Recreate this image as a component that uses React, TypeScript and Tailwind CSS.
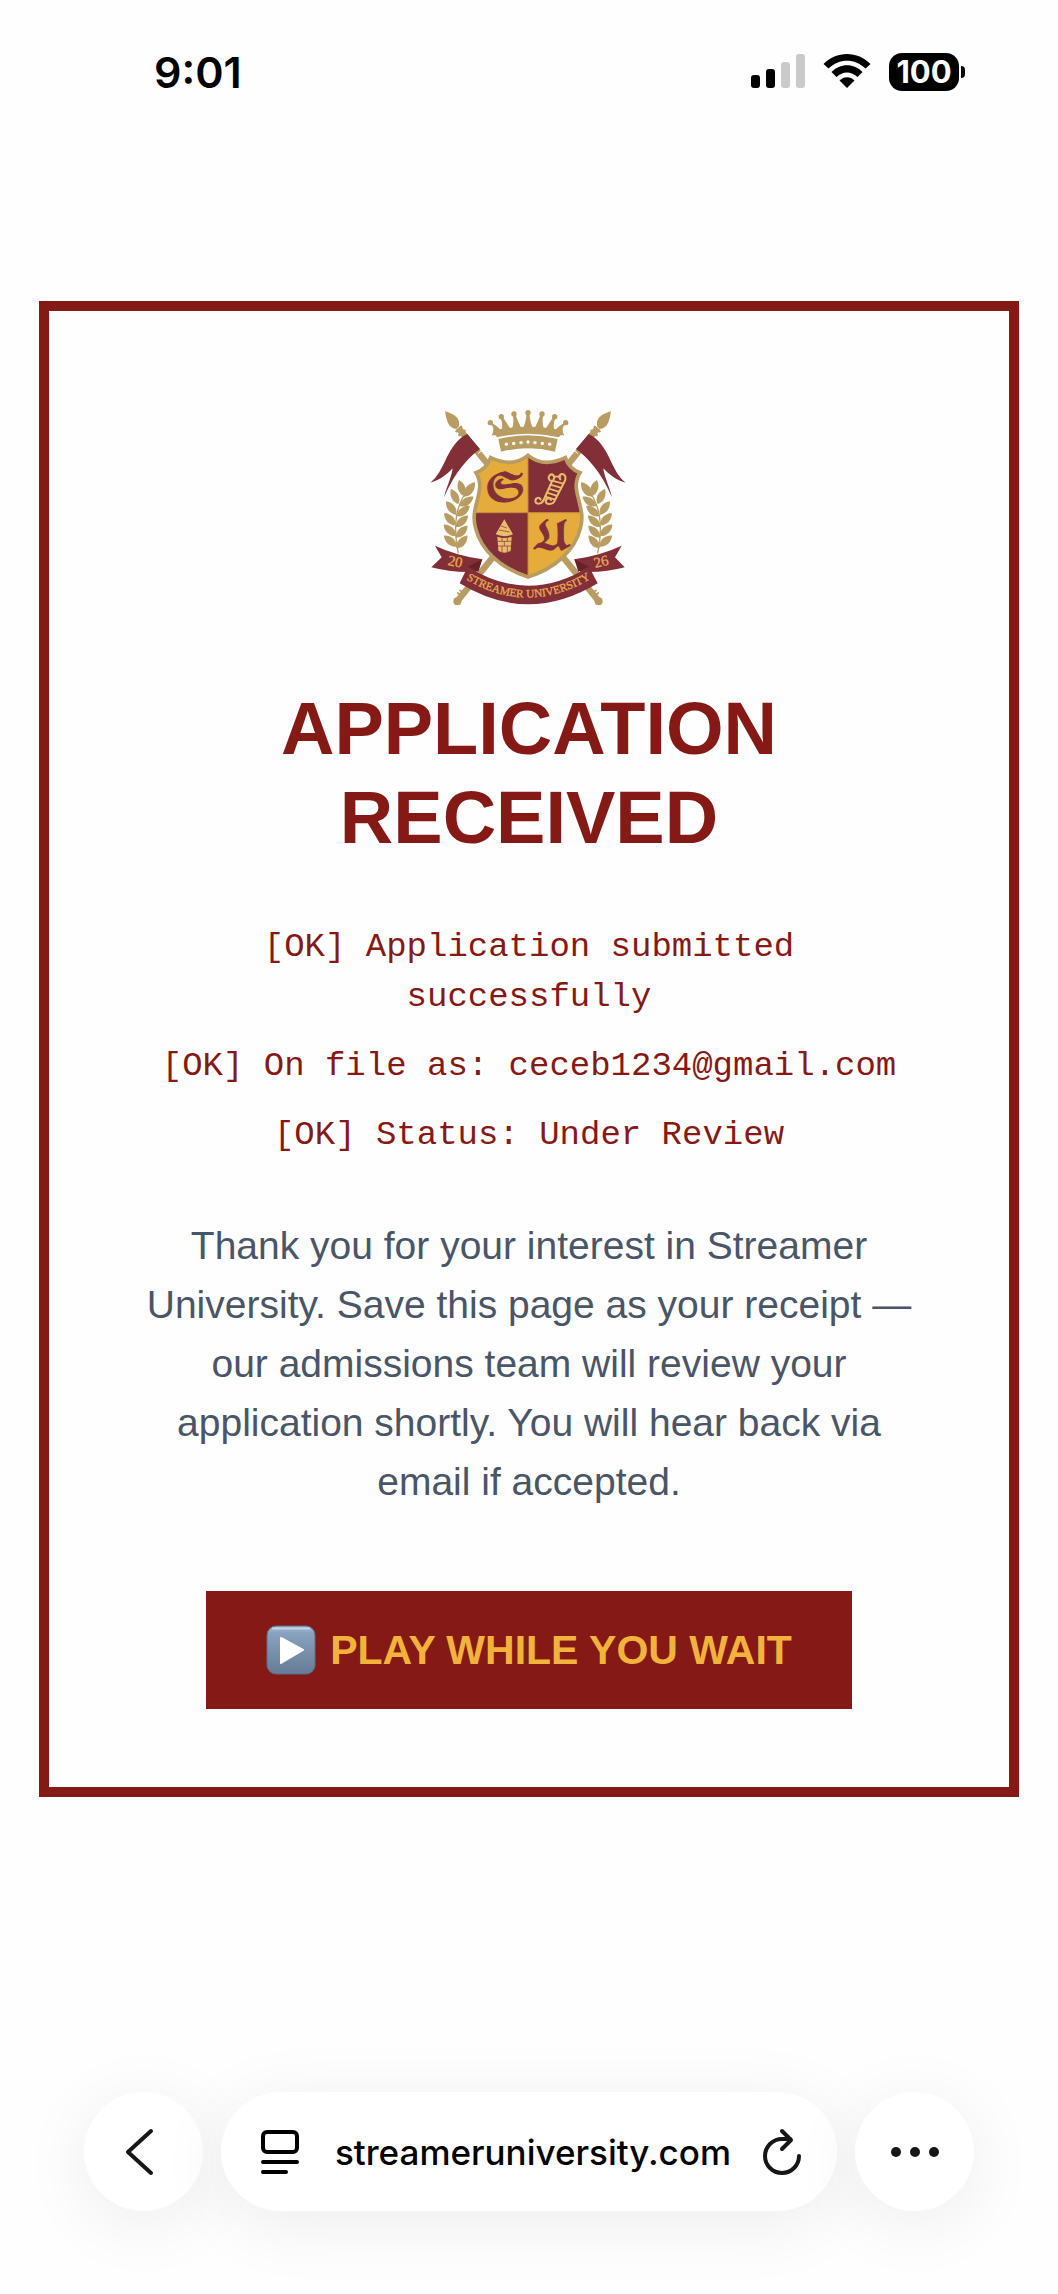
import { useState } from 'react';

const STATUS_LINES = [
  '[OK] Application submitted successfully',
  '[OK] On file as: ceceb1234@gmail.com',
  '[OK] Status: Under Review',
];

// Laurel leaves: base x, base y, rotation, length scale
const LEAVES = [
  [112, 440, -48, 1],
  [110, 408, -46, 1],
  [109, 376, -42, 1],
  [111, 344, -36, 1],
  [118, 312, -26, 1],
  [134, 288, -16, 1],
  [112, 444, 42, 1],
  [110, 412, 46, 1],
  [110, 380, 48, 1],
  [113, 348, 52, 1],
  [122, 318, 56, 1],
  [134, 290, 38, 1.1],
];

// Crown points: ball x, ball y, base x, base y
const CROWN_POINTS = [
  [214, 68, 238, 100],
  [247, 50, 263, 94],
  [285, 42, 294, 90],
  [327, 38, 327, 88],
  [369, 42, 360, 90],
  [407, 50, 391, 94],
  [440, 68, 416, 100],
];

const SHIELD =
  'M327 166 C295 192 255 192 215 173 C208 194 194 210 171 218 C205 270 150 320 170 385 C186 450 245 505 327 531 C409 505 468 450 484 385 C504 320 449 270 483 218 C460 210 446 194 439 173 C399 192 359 192 327 166 Z';

function CrestSide() {
  return (
    <g>
      {/* Lance */}
      <path d="M118 84 L538 602" stroke="#b89c62" strokeWidth="19" />
      <path d="M172 152 L186 141 M178 160 L193 148" stroke="#fefefe" strokeWidth="3" />
      <path d="M78 34 C102 42 126 52 119 80 L112 87 C88 86 82 60 78 34 Z" fill="#b89c62" />
      <path d="M112 94 L127 81 M121 105 L137 92" stroke="#b89c62" strokeWidth="7" strokeLinecap="round" />
      <path d="M517 582 L531 571 M523 591 L538 579" stroke="#b89c62" strokeWidth="5" strokeLinecap="round" />
      <circle cx="539" cy="604" r="12" fill="#b89c62" />
      {/* Pennant */}
      <path
        d="M145 102 L183 147 C150 170 108 215 75 292 C84 258 98 230 101 205 C82 225 62 240 34 248 C80 214 82 132 145 102 Z"
        fill="#822f38"
      />
      {/* Laurel */}
      <path d="M152 262 C112 310 100 370 118 460" stroke="#b89c62" strokeWidth="4" fill="none" />
      {LEAVES.map(([x, y, angle, scale]) => (
        <path
          key={`${x}-${y}-${angle}`}
          d="M0 0 C17 -12 14 -36 0 -50 C-14 -36 -14 -12 0 0 Z"
          transform={`translate(${x} ${y}) rotate(${angle}) scale(${scale})`}
          fill="#b89c62"
        />
      ))}
    </g>
  );
}

function Crest() {
  return (
    <svg viewBox="0 0 660 660" className="w-[220px] h-[220px]" role="img" aria-label="Streamer University crest">
      <defs>
        <clipPath id="shield">
          <path d={SHIELD} />
        </clipPath>
        <path id="motto" d="M138 536 Q328 650 519 534" />
      </defs>

      <CrestSide />
      <g transform="translate(654 0) scale(-1 1)">
        <CrestSide />
      </g>

      {/* Crown */}
      {CROWN_POINTS.map(([x, y, baseX, baseY]) => (
        <g key={x} fill="#b89c62">
          <path d={`M${x - 4} ${y} L${x + 4} ${y} Q${baseX + 6} ${baseY - 16} ${baseX + 20} ${baseY + 6} L${baseX - 20} ${baseY + 6} Q${baseX - 6} ${baseY - 16} ${x - 4} ${y} Z`} />
          <circle cx={x} cy={y} r="8" />
        </g>
      ))}
      <path d="M222 92 Q327 68 432 92 L420 112 Q327 90 234 112 Z" fill="#b89c62" />
      <path d="M238 117 Q327 95 416 117 L408 155 Q327 135 246 155 Z" fill="#b89c62" />
      {[262, 284, 306, 327, 348, 370, 392].map((x) => (
        <circle key={x} cx={x} cy={126 + Math.abs(x - 327) / 10} r="5" fill="#fefefe" />
      ))}

      {/* Shield */}
      <g clipPath="url(#shield)">
        <path d="M150 150 H327 V338 H150 Z" fill="#e5ab3b" />
        <path d="M327 150 H510 V338 H327 Z" fill="#822f38" />
        <path d="M150 338 H327 V540 H150 Z" fill="#822f38" />
        <path d="M327 338 H510 V540 H327 Z" fill="#e5ab3b" />
        <path d="M327 150 V540 M150 338 H510" stroke="#c48a38" strokeWidth="3" />
      </g>
      <path d={SHIELD} fill="none" stroke="#b89c62" strokeWidth="11" />
      <g className="font-['DejaVu_Math_TeX_Gyre','Liberation_Serif',serif]" fontSize="112" fill="#822f38" stroke="#822f38" strokeWidth="3" textAnchor="middle">
        <text x="258" y="304">𝕾</text>
        <text x="398" y="446">𝖀</text>
      </g>

      {/* Scroll */}
      <g fill="none" stroke="#e9bd6c" strokeWidth="6" strokeLinecap="round">
        <path d="M404 238 C410 228 400 219 392 226 C385 234 392 245 400 242 L374 300 C368 314 350 314 349 303 C349 293 362 290 365 299" />
        <path d="M424 238 C416 228 426 218 435 224 C442 230 439 240 436 246 L408 300 C402 316 382 315 380 304 C380 294 393 292 396 300" />
        <path d="M399 242 L430 250 M394 254 L425 263 M389 266 L419 275 M384 278 L412 287 M379 290 L406 298 M404 230 L424 230" strokeWidth="5" />
      </g>

      {/* Tower */}
      <g fill="#e9bd6c">
        <path d="M256 358 L282 403 Q256 414 230 403 Z" />
        <path d="M235 410 Q256 418 278 410 L275 452 Q256 464 238 452 Z" />
      </g>
      <path
        d="M246 378 L264 384 M240 390 L272 396 M236 424 H277 M236 438 H277 M249 412 V424 M265 412 V424 M256 424 V438 M249 438 V458 M265 438 V458"
        stroke="#822f38"
        strokeWidth="2"
      />

      {/* Ribbon */}
      <path d="M48 437 Q110 466 190 478 L170 520 L146 516 Q90 516 37 502 L68 472 Z" fill="#822f38" />
      <path d="M608 437 Q546 466 466 478 L486 520 L510 516 Q566 516 617 502 L588 472 Z" fill="#822f38" />
      <path d="M146 500 Q328 614 510 500 L536 550 Q328 676 122 550 Z" fill="#822f38" />
      <path d="M146 500 L190 478 L178 515 Z" fill="#682029" />
      <path d="M510 500 L466 478 L478 515 Z" fill="#682029" />
      <g className="font-['Liberation_Serif',serif]" fill="#e9a951" stroke="#e9a951" strokeWidth="1" textAnchor="middle">
        <text fontSize="44" transform="translate(106 499) rotate(11)">20</text>
        <text fontSize="44" transform="translate(550 499) rotate(-14)">26</text>
        <text fontSize="34">
          <textPath href="#motto" startOffset="50%">STREAMER UNIVERSITY</textPath>
        </text>
      </g>
    </svg>
  );
}

function StatusBar() {
  return (
    <header className="flex items-center justify-between pt-[45px] pl-[154px] pr-[93px] text-black">
      <time className="text-[43px] leading-[54px] font-semibold">9:01</time>
      <div className="flex items-center gap-[18px]">
        <svg viewBox="0 0 54 38" className="w-[54px] h-[38px]" aria-label="Signal, 2 of 4 bars">
          <rect x="0" y="22" width="9" height="13" rx="3" />
          <rect x="15" y="16" width="9" height="19" rx="3" />
          <rect x="30" y="9" width="9" height="26" rx="3" fill="#cacaca" />
          <rect x="45" y="1" width="9" height="34" rx="3" fill="#cacaca" />
        </svg>
        <svg viewBox="0 0 48 38" className="w-[48px] h-[38px]" aria-label="Wi-Fi">
          <path d="M0.500 11 C13 -2.500 35 -2.500 47.500 11 L42.500 15.500 C32 5 16 5 5.500 15.500 Z" strokeLinejoin="round" />
          <path d="M8.500 19 C17 10 31 10 39.500 19 L34.500 24 C28 18 20 18 13.500 24 Z" />
          <path d="M16.500 27.500 C20.500 23 27.500 23 31.500 27.500 L24 35 Z" />
        </svg>
        <div className="flex items-center gap-[2px]">
          <div className="flex items-center justify-center w-[70px] h-[38px] rounded-[13px] bg-black text-white text-[31px] leading-[38px] font-bold">
            100
          </div>
          <div className="w-[4px] h-[12px] rounded-r-full bg-black" />
        </div>
      </div>
    </header>
  );
}

function PlayIcon() {
  return (
    <svg viewBox="0 0 50 50" className="w-[50px] h-[50px]" aria-hidden="true">
      <defs>
        <linearGradient id="key" x1="0" y1="0" x2="0" y2="1">
          <stop offset="0" stopColor="#a3bdd6" />
          <stop offset="0.150" stopColor="#88a2be" />
          <stop offset="1" stopColor="#667b95" />
        </linearGradient>
      </defs>
      <rect x="1" y="1" width="48" height="48" rx="9" fill="url(#key)" stroke="#58708c" strokeWidth="1" />
      <path d="M7 3.500 H43" stroke="#c3d6e8" strokeWidth="2" strokeLinecap="round" />
      <path d="M15 13 L37 25 L15 38 Z" fill="#fff" stroke="#fff" strokeWidth="2" strokeLinejoin="round" />
    </svg>
  );
}

function BrowserBar() {
  const [address, setAddress] = useState('streameruniversity.com');

  return (
    <nav className="flex items-center gap-[18px] mt-auto px-[84px] pb-[83px] text-[#161616]">
      <button
        type="button"
        aria-label="Back"
        className="flex shrink-0 items-center justify-center size-[119px] rounded-full bg-white shadow-[0_12px_72px_rgba(0,0,0,0.07)]"
      >
        <svg viewBox="0 0 30 48" className="w-[30px] h-[48px] mr-[10px]" fill="none" stroke="currentColor" strokeWidth="4" strokeLinecap="round" strokeLinejoin="round">
          <path d="M27 3 L4 24 L27 45" />
        </svg>
      </button>

      <div className="flex min-w-0 flex-1 items-center h-[119px] px-[36px] rounded-full bg-white shadow-[0_12px_72px_rgba(0,0,0,0.07)]">
        <button type="button" aria-label="Page menu" className="shrink-0 px-[4px]">
          <svg viewBox="0 0 38 46" className="w-[38px] h-[46px]" fill="none" stroke="#000" strokeWidth="4" strokeLinecap="round">
            <rect x="2" y="3" width="34" height="20" rx="4" />
            <path d="M2 33 H36 M2 43 H25" />
          </svg>
        </button>
        <input
          type="text"
          aria-label="Address"
          value={address}
          onChange={(e) => setAddress(e.target.value)}
          className="min-w-0 flex-1 text-center text-[35px] leading-[48px] font-medium text-black focus:outline-none"
        />
        <button type="button" aria-label="Reload" className="shrink-0">
          <svg viewBox="0 0 38 48" className="w-[38px] h-[48px]" fill="none" stroke="currentColor" strokeWidth="4" strokeLinecap="round" strokeLinejoin="round">
            <path d="M36 28 A17 17 0 1 1 19 11 H27" />
            <path d="M19 3 L28 12 L19 21" />
          </svg>
        </button>
      </div>

      <button
        type="button"
        aria-label="More"
        className="flex shrink-0 items-center justify-center size-[119px] rounded-full bg-white shadow-[0_12px_72px_rgba(0,0,0,0.07)]"
      >
        <svg viewBox="0 0 48 10" className="w-[48px] h-[10px]" fill="currentColor">
          <circle cx="5" cy="5" r="5" />
          <circle cx="24" cy="5" r="5" />
          <circle cx="43" cy="5" r="5" />
        </svg>
      </button>
    </nav>
  );
}

export default function App() {
  return (
    <div className="flex flex-col min-h-screen bg-[#fefefe] font-['Inter','Liberation_Sans',sans-serif]">
      <StatusBar />

      <main className="mt-[202px] mx-[39px] flex flex-col items-center border-[10px] border-[#851915] px-[90px] pt-[89px] pb-[78px] text-center font-['Liberation_Sans',Arial,sans-serif]">
        <Crest />

        <h1 className="mt-[64px] text-[74px] leading-[89px] font-bold text-[#851915]">APPLICATION RECEIVED</h1>

        <ul className="mt-[60px] flex flex-col gap-[19px] font-['Liberation_Mono',monospace] text-[34px] leading-[50px] text-[#851915]">
          {STATUS_LINES.map((line) => (
            <li key={line}>{line}</li>
          ))}
        </ul>

        <p className="mt-[56px] text-[39px] leading-[59px] text-[#4a5568]">
          Thank you for your interest in Streamer University. Save this page as your receipt — our admissions team will
          review your application shortly. You will hear back via email if accepted.
        </p>

        <button
          type="button"
          className="mt-[80px] flex items-center gap-[14px] h-[118px] px-[60px] bg-[#851915] text-[41px] leading-[58px] font-bold text-[#f2b33c] whitespace-nowrap"
        >
          <PlayIcon />
          PLAY WHILE YOU WAIT
        </button>
      </main>

      <BrowserBar />
    </div>
  );
}
